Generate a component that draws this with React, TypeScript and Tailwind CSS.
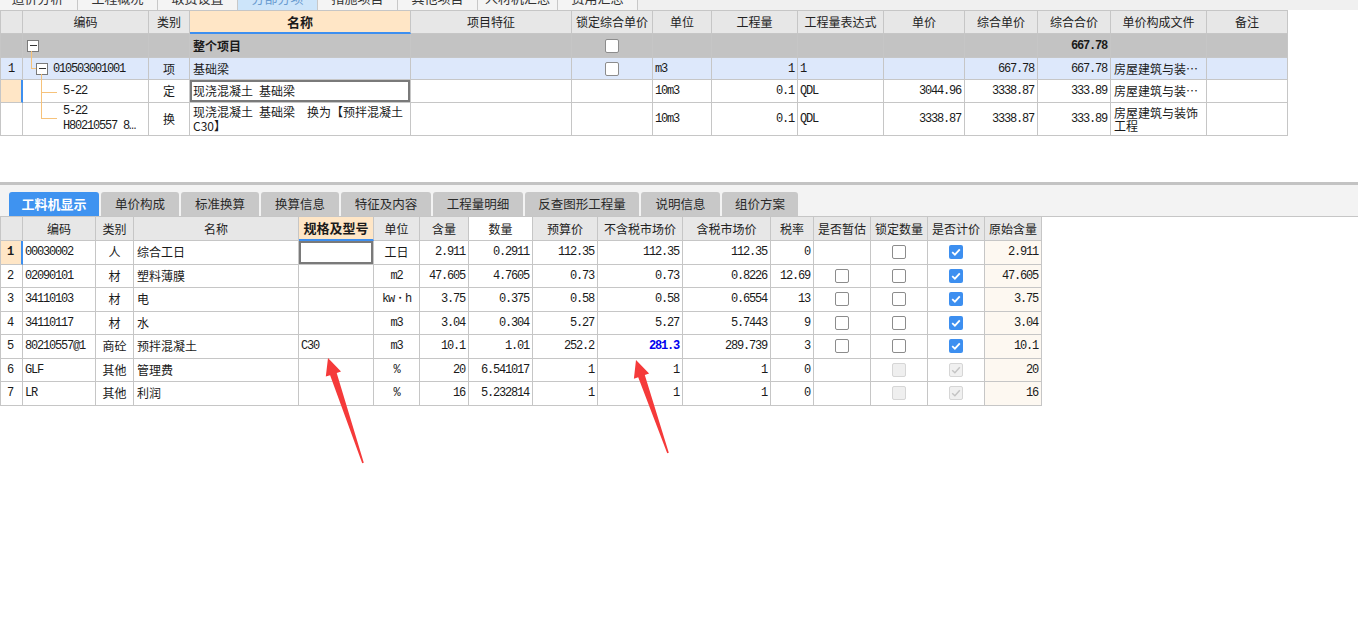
import React from 'react';

const cjk = "font-['Noto_Sans_CJK_SC',sans-serif]";
const mono = "font-['Liberation_Mono',monospace] text-[12px] tracking-[-1.2px]";

type CellProps = { w: string; className?: string; children?: React.ReactNode };
function Cell({ w, className = '', children }: CellProps) {
  return (
    <div
      className={`${w} shrink-0 h-full border-r border-b border-[#c6c6c6] flex items-center overflow-hidden whitespace-nowrap ${className}`}
    >
      {children}
    </div>
  );
}

function Minus() {
  return (
    <div className="w-[12px] h-[12px] shrink-0 border border-[#7a7a7a] bg-white flex items-center justify-center">
      <div className="w-[7px] h-[1px] bg-[#333]" />
    </div>
  );
}

type BoxState = 'empty' | 'checked' | 'dis' | 'white';
function Box({ s }: { s: BoxState }) {
  if (s === 'checked')
    return (
      <div className="w-[14px] h-[14px] rounded-[2px] bg-[#3d8ff0] flex items-center justify-center">
        <svg width="10" height="8" viewBox="0 0 10 8">
          <path d="M1.2 4.2 L3.9 6.7 L8.8 1.3" stroke="white" strokeWidth="1.8" fill="none" />
        </svg>
      </div>
    );
  if (s === 'dis')
    return (
      <div className="w-[14px] h-[14px] rounded-[2px] bg-[#f0f0f0] border border-[#d6d6d6] flex items-center justify-center">
        <svg width="10" height="8" viewBox="0 0 10 8">
          <path d="M1.2 4.2 L3.9 6.7 L8.8 1.3" stroke="#c4c4c4" strokeWidth="1.5" fill="none" />
        </svg>
      </div>
    );
  if (s === 'white')
    return <div className="w-[14px] h-[14px] rounded-[2px] bg-[#efefef] border border-[#d6d6d6]" />;
  return <div className="w-[14px] h-[14px] rounded-[2px] bg-white border border-[#8c8c8c]" />;
}

const TW = [
  'w-[22px]', 'w-[126px]', 'w-[41px]', 'w-[221px]', 'w-[161px]', 'w-[81px]', 'w-[59px]',
  'w-[86px]', 'w-[86px]', 'w-[81px]', 'w-[73px]', 'w-[73px]', 'w-[96px]', 'w-[81px]',
];
const TH = ['', '编码', '类别', '名称', '项目特征', '锁定综合单价', '单位', '工程量', '工程量表达式', '单价', '综合单价', '综合合价', '单价构成文件', '备注'];

const BW = [
  'w-[22px]', 'w-[73px]', 'w-[38px]', 'w-[165px]', 'w-[75px]', 'w-[46px]', 'w-[49px]', 'w-[64px]',
  'w-[65px]', 'w-[85px]', 'w-[88px]', 'w-[43px]', 'w-[57px]', 'w-[57px]', 'w-[57px]', 'w-[57px]',
];
const BH = ['', '编码', '类别', '名称', '规格及型号', '单位', '含量', '数量', '预算价', '不含税市场价', '含税市场价', '税率', '是否暂估', '锁定数量', '是否计价', '原始含量'];

type BRow = {
  n: string; code: string; type: string; name: string; spec: string; unit: string; unitCjk?: boolean;
  q: string; num: string; budget: string; mkt: string; mktBlue?: boolean; tax: string; rate: string;
  est: BoxState | null; lock: BoxState; calc: BoxState; orig: string;
};
const BR: BRow[] = [
  { n: '1', code: '00030002', type: '人', name: '综合工日', spec: '', unit: '工日', unitCjk: true, q: '2.911', num: '0.2911', budget: '112.35', mkt: '112.35', tax: '112.35', rate: '0', est: null, lock: 'empty', calc: 'checked', orig: '2.911' },
  { n: '2', code: '02090101', type: '材', name: '塑料薄膜', spec: '', unit: 'm2', q: '47.605', num: '4.7605', budget: '0.73', mkt: '0.73', tax: '0.8226', rate: '12.69', est: 'empty', lock: 'empty', calc: 'checked', orig: '47.605' },
  { n: '3', code: '34110103', type: '材', name: '电', spec: '', unit: 'kw・h', q: '3.75', num: '0.375', budget: '0.58', mkt: '0.58', tax: '0.6554', rate: '13', est: 'empty', lock: 'empty', calc: 'checked', orig: '3.75' },
  { n: '4', code: '34110117', type: '材', name: '水', spec: '', unit: 'm3', q: '3.04', num: '0.304', budget: '5.27', mkt: '5.27', tax: '5.7443', rate: '9', est: 'empty', lock: 'empty', calc: 'checked', orig: '3.04' },
  { n: '5', code: '80210557@1', type: '商砼', name: '预拌混凝土', spec: 'C30', unit: 'm3', q: '10.1', num: '1.01', budget: '252.2', mkt: '281.3', mktBlue: true, tax: '289.739', rate: '3', est: 'empty', lock: 'empty', calc: 'checked', orig: '10.1' },
  { n: '6', code: 'GLF', type: '其他', name: '管理费', spec: '', unit: '%', q: '20', num: '6.541017', budget: '1', mkt: '1', tax: '1', rate: '0', est: null, lock: 'white', calc: 'dis', orig: '20' },
  { n: '7', code: 'LR', type: '其他', name: '利润', spec: '', unit: '%', q: '16', num: '5.232814', budget: '1', mkt: '1', tax: '1', rate: '0', est: null, lock: 'white', calc: 'dis', orig: '16' },
];

const topTabs = ['造价分析', '工程概况', '取费设置', '分部分项', '措施项目', '其他项目', '人材机汇总', '费用汇总'];
const bottomTabs: { t: string; w: string }[] = [
  { t: '工料机显示', w: 'w-[90px]' },
  { t: '单价构成', w: 'w-[78px]' },
  { t: '标准换算', w: 'w-[78px]' },
  { t: '换算信息', w: 'w-[78px]' },
  { t: '特征及内容', w: 'w-[90px]' },
  { t: '工程量明细', w: 'w-[90px]' },
  { t: '反查图形工程量', w: 'w-[114px]' },
  { t: '说明信息', w: 'w-[79px]' },
  { t: '组价方案', w: 'w-[76px]' },
];

export default function App() {
  return (
    <div className={`relative w-[1358px] h-[631px] overflow-hidden bg-white text-[12px] text-[#1a1a1a] ${cjk}`}>
      {/* top tab strip (cut off) */}
      <div className="h-[10px] bg-[#f0f0f0] overflow-hidden flex">
        <div className="flex -ml-[2px]">
          {topTabs.map((t, i) => (
            <div
              key={t}
              className={`w-[80px] h-[10px] border-r border-[#c8c8c8] flex justify-center overflow-hidden ${i === 3 ? 'bg-[#cde5fa] text-[#6a9cd0]' : 'bg-[#f4f4f4] text-[#333]'}`}
            >
              <span className="text-[13px] leading-[13px] -mt-[9px]">{t}</span>
            </div>
          ))}
        </div>
      </div>

      {/* top table */}
      <div className="h-[172px]">
        <div className="relative inline-flex flex-col border-l border-t border-[#c6c6c6]">
          {/* header */}
          <div className="flex h-[23px]">
            {TH.map((h, i) => (
              <Cell
                key={i}
                w={TW[i]}
                className={
                  i === 3
                    ? 'justify-center bg-[#ffe6c6] font-bold border-b-2 border-b-[#3d8ff0] text-[13px]'
                    : 'justify-center bg-[#e7e7e7] text-[#222]'
                }
              >
                {h}
              </Cell>
            ))}
          </div>
          {/* 整个项目 */}
          <div className="flex h-[24px] bg-[#c3c3c3]">
            {TW.map((w, i) => (
              <Cell key={i} w={w} className={i === 1 ? 'pl-[4px]' : i === 3 ? 'pl-[3px] font-bold' : i === 5 ? 'justify-center' : i === 11 ? `justify-end pr-[3px] font-bold ${mono}` : ''}>
                {i === 1 && <Minus />}
                {i === 3 && '整个项目'}
                {i === 5 && <Box s="empty" />}
                {i === 11 && '667.78'}
              </Cell>
            ))}
          </div>
          {/* row 1 */}
          <div className="flex h-[22px] bg-[#dde8fb]">
            <Cell w={TW[0]} className={`pl-[7px] ${mono}`}>1</Cell>
            <Cell w={TW[1]} className="pl-[13px]">
              <Minus />
              <span className={`ml-[5px] ${mono}`}>010503001001</span>
            </Cell>
            <Cell w={TW[2]} className="justify-center">项</Cell>
            <Cell w={TW[3]} className="pl-[3px]">基础梁</Cell>
            <Cell w={TW[4]} />
            <Cell w={TW[5]} className="justify-center"><Box s="empty" /></Cell>
            <Cell w={TW[6]} className={`pl-[2px] ${mono}`}>m3</Cell>
            <Cell w={TW[7]} className={`justify-end pr-[3px] ${mono}`}>1</Cell>
            <Cell w={TW[8]} className={`pl-[2px] ${mono}`}>1</Cell>
            <Cell w={TW[9]} />
            <Cell w={TW[10]} className={`justify-end pr-[3px] ${mono}`}>667.78</Cell>
            <Cell w={TW[11]} className={`justify-end pr-[3px] ${mono}`}>667.78</Cell>
            <Cell w={TW[12]} className="pl-[3px]">房屋建筑与装…</Cell>
            <Cell w={TW[13]} />
          </div>
          {/* row 5-22 */}
          <div className="flex h-[23px] bg-white">
            <Cell w={TW[0]} className="bg-[#ffe6c6] border-r-2 border-r-[#3d8ff0]" />
            <Cell w={TW[1]} className={`pl-[40px] ${mono}`}>5-22</Cell>
            <Cell w={TW[2]} className="justify-center">定</Cell>
            <Cell w={TW[3]} className="pl-[3px] shadow-[inset_0_0_0_2px_#7a7a7a]">{'现浇混凝土\u2002基础梁'}</Cell>
            <Cell w={TW[4]} />
            <Cell w={TW[5]} />
            <Cell w={TW[6]} className={`pl-[2px] ${mono}`}>10m3</Cell>
            <Cell w={TW[7]} className={`justify-end pr-[3px] ${mono}`}>0.1</Cell>
            <Cell w={TW[8]} className={`pl-[2px] ${mono}`}>QDL</Cell>
            <Cell w={TW[9]} className={`justify-end pr-[3px] ${mono}`}>3044.96</Cell>
            <Cell w={TW[10]} className={`justify-end pr-[3px] ${mono}`}>3338.87</Cell>
            <Cell w={TW[11]} className={`justify-end pr-[3px] ${mono}`}>333.89</Cell>
            <Cell w={TW[12]} className="pl-[3px]">房屋建筑与装…</Cell>
            <Cell w={TW[13]} />
          </div>
          {/* row 换 */}
          <div className="flex h-[33px] bg-white">
            <Cell w={TW[0]} />
            <Cell w={TW[1]} className={`pl-[40px] ${mono}`}>
              <div className="leading-[15px]">
                <div>5-22</div>
                <div>H80210557 8…</div>
              </div>
            </Cell>
            <Cell w={TW[2]} className="justify-center">换</Cell>
            <Cell w={TW[3]} className="pl-[3px]">
              <div className="leading-[14px]">
                <div>{'现浇混凝土\u2002基础梁\u2002\u2002换为【预拌混凝土'}</div>
                <div>C30】</div>
              </div>
            </Cell>
            <Cell w={TW[4]} />
            <Cell w={TW[5]} />
            <Cell w={TW[6]} className={`pl-[2px] ${mono}`}>10m3</Cell>
            <Cell w={TW[7]} className={`justify-end pr-[3px] ${mono}`}>0.1</Cell>
            <Cell w={TW[8]} className={`pl-[2px] ${mono}`}>QDL</Cell>
            <Cell w={TW[9]} className={`justify-end pr-[3px] ${mono}`}>3338.87</Cell>
            <Cell w={TW[10]} className={`justify-end pr-[3px] ${mono}`}>3338.87</Cell>
            <Cell w={TW[11]} className={`justify-end pr-[3px] ${mono}`}>333.89</Cell>
            <Cell w={TW[12]} className="pl-[3px]">
              <div className="leading-[13px]">
                <div>房屋建筑与装饰</div>
                <div>工程</div>
              </div>
            </Cell>
            <Cell w={TW[13]} />
          </div>

          {/* tree lines */}
          <div className="absolute left-[30px] top-[40px] w-[1px] h-[18px] bg-[#f6c27a]" />
          <div className="absolute left-[30px] top-[57px] w-[5px] h-[1px] bg-[#f6c27a]" />
          <div className="absolute left-[40px] top-[63px] w-[1px] h-[45px] bg-[#f6c27a]" />
          <div className="absolute left-[40px] top-[81px] w-[16px] h-[1px] bg-[#f6c27a]" />
          <div className="absolute left-[40px] top-[107px] w-[16px] h-[1px] bg-[#f6c27a]" />
        </div>
      </div>

      {/* divider */}
      <div className="h-[3px] bg-[#c3c3c3]" />

      {/* bottom tabs */}
      <div className="h-[31px] bg-[#f3f3f3] flex items-end pl-[9px] gap-[2px]">
        {bottomTabs.map((t, i) => (
          <div
            key={t.t}
            className={`${t.w} h-[24px] rounded-t-[3px] flex items-center justify-center ${
              i === 0 ? 'bg-[#3f93f0] text-white font-bold text-[13px]' : 'bg-[#c8c8c8] text-[#2a2a2a] text-[12.5px]'
            }`}
          >
            {t.t}
          </div>
        ))}
      </div>

      {/* bottom table */}
      <div className="border-t border-[#c6c6c6]">
        <div className="inline-flex flex-col border-l border-[#c6c6c6]">
          <div className="flex h-[24px]">
            {BH.map((h, i) => (
              <Cell
                key={i}
                w={BW[i]}
                className={
                  i === 4
                    ? 'justify-center bg-[#ffe6c6] font-bold border-b-2 border-b-[#3d8ff0] text-[13px]'
                    : i === 7
                    ? 'justify-center bg-white text-[#222]'
                    : 'justify-center bg-[#e7e7e7] text-[#222]'
                }
              >
                {h}
              </Cell>
            ))}
          </div>
          {BR.map((r, ri) => (
            <div key={r.n} className="flex h-[23.5px] bg-white">
              <Cell
                w={BW[0]}
                className={ri === 0 ? `pl-[6px] font-bold bg-[#ffe6c6] border-r-2 border-r-[#3d8ff0] ${mono}` : `pl-[6px] ${mono}`}
              >
                {r.n}
              </Cell>
              <Cell w={BW[1]} className={`pl-[2px] ${mono}`}>{r.code}</Cell>
              <Cell w={BW[2]} className="justify-center">{r.type}</Cell>
              <Cell w={BW[3]} className="pl-[3px]">{r.name}</Cell>
              <Cell w={BW[4]} className={ri === 0 ? 'shadow-[inset_0_0_0_2px_#7a7a7a]' : `pl-[2px] ${mono}`}>{r.spec}</Cell>
              <Cell w={BW[5]} className={r.unitCjk ? 'justify-center' : `justify-center ${mono}`}>{r.unit}</Cell>
              <Cell w={BW[6]} className={`justify-end pr-[3px] ${mono}`}>{r.q}</Cell>
              <Cell w={BW[7]} className={`justify-end pr-[3px] ${mono}`}>{r.num}</Cell>
              <Cell w={BW[8]} className={`justify-end pr-[3px] ${mono}`}>{r.budget}</Cell>
              <Cell w={BW[9]} className={`justify-end pr-[3px] ${mono} ${r.mktBlue ? 'font-bold text-[#0000ee]' : ''}`}>{r.mkt}</Cell>
              <Cell w={BW[10]} className={`justify-end pr-[3px] ${mono}`}>{r.tax}</Cell>
              <Cell w={BW[11]} className={`justify-end pr-[3px] ${mono}`}>{r.rate}</Cell>
              <Cell w={BW[12]} className="justify-center">{r.est && <Box s={r.est} />}</Cell>
              <Cell w={BW[13]} className="justify-center"><Box s={r.lock} /></Cell>
              <Cell w={BW[14]} className="justify-center"><Box s={r.calc} /></Cell>
              <Cell w={BW[15]} className={`justify-end pr-[3px] bg-[#fdf8f1] ${mono}`}>{r.orig}</Cell>
            </div>
          ))}
        </div>
      </div>

      {/* red annotation arrows */}
      <svg className="absolute left-0 top-0 pointer-events-none" width="1358" height="631" viewBox="0 0 1358 631">
        <polygon
          points="328,358 341,371.6 336.7,373 363.8,462.7 362.2,463.3 330.1,375.2 325.8,376.6"
          fill="#f53a3a"
        />
        <polygon
          points="636,360 649.1,373.5 644.8,375 668.8,452.7 667.2,453.3 638.2,377.2 633.9,378.7"
          fill="#f53a3a"
        />
      </svg>
    </div>
  );
}
